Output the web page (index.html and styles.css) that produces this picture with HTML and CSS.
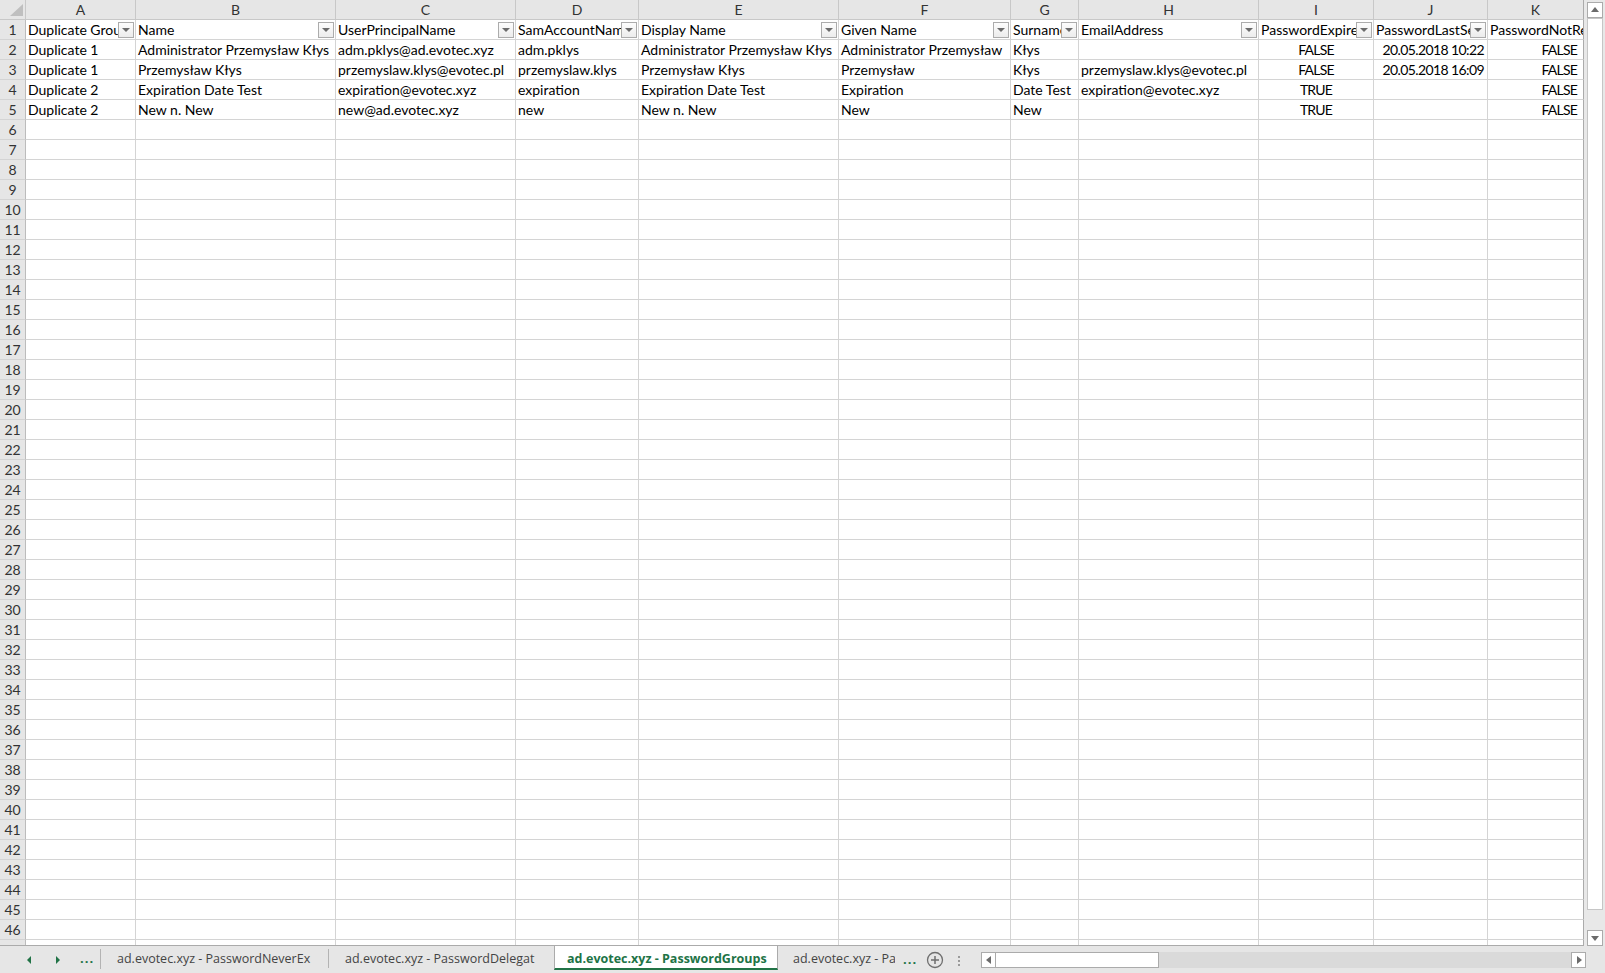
FILE: index.html
```html
<!DOCTYPE html>
<html lang="en">
<head>
    <meta charset="UTF-8">
    <meta name="viewport" content="width=device-width, initial-scale=1.0">
    <title>ad.evotec.xyz - PasswordGroups</title>
    <link rel="stylesheet" href="styles.css">
</head>
<body>
    <div class="workbook">
        <div class="sheet">
            <div class="grid" id="grid">
                <div class="row head">
                    <div class="cell corner"></div>
                    <div class="cell">A</div>
                    <div class="cell">B</div>
                    <div class="cell">C</div>
                    <div class="cell">D</div>
                    <div class="cell">E</div>
                    <div class="cell">F</div>
                    <div class="cell">G</div>
                    <div class="cell">H</div>
                    <div class="cell">I</div>
                    <div class="cell">J</div>
                    <div class="cell">K</div>
                </div>
                <div class="row">
                    <div class="cell num">1</div>
                    <div class="cell">Duplicate Group<span class="filter"></span></div>
                    <div class="cell">Name<span class="filter"></span></div>
                    <div class="cell">UserPrincipalName<span class="filter"></span></div>
                    <div class="cell">SamAccountName<span class="filter"></span></div>
                    <div class="cell">Display Name<span class="filter"></span></div>
                    <div class="cell">Given Name<span class="filter"></span></div>
                    <div class="cell">Surname<span class="filter"></span></div>
                    <div class="cell">EmailAddress<span class="filter"></span></div>
                    <div class="cell">PasswordExpired<span class="filter"></span></div>
                    <div class="cell">PasswordLastSet<span class="filter"></span></div>
                    <div class="cell">PasswordNotRequired</div>
                </div>
                <div class="row">
                    <div class="cell num">2</div>
                    <div class="cell">Duplicate 1</div>
                    <div class="cell">Administrator Przemysław Kłys</div>
                    <div class="cell">adm.pklys@ad.evotec.xyz</div>
                    <div class="cell">adm.pklys</div>
                    <div class="cell">Administrator Przemysław Kłys</div>
                    <div class="cell">Administrator Przemysław</div>
                    <div class="cell">Kłys</div>
                    <div class="cell"></div>
                    <div class="cell bool">FALSE</div>
                    <div class="cell date">20.05.2018 10:22</div>
                    <div class="cell bool last">FALSE</div>
                </div>
                <div class="row">
                    <div class="cell num">3</div>
                    <div class="cell">Duplicate 1</div>
                    <div class="cell">Przemysław Kłys</div>
                    <div class="cell">przemyslaw.klys@evotec.pl</div>
                    <div class="cell">przemyslaw.klys</div>
                    <div class="cell">Przemysław Kłys</div>
                    <div class="cell">Przemysław</div>
                    <div class="cell">Kłys</div>
                    <div class="cell">przemyslaw.klys@evotec.pl</div>
                    <div class="cell bool">FALSE</div>
                    <div class="cell date">20.05.2018 16:09</div>
                    <div class="cell bool last">FALSE</div>
                </div>
                <div class="row">
                    <div class="cell num">4</div>
                    <div class="cell">Duplicate 2</div>
                    <div class="cell">Expiration Date Test</div>
                    <div class="cell">expiration@evotec.xyz</div>
                    <div class="cell">expiration</div>
                    <div class="cell">Expiration Date Test</div>
                    <div class="cell">Expiration</div>
                    <div class="cell">Date Test</div>
                    <div class="cell">expiration@evotec.xyz</div>
                    <div class="cell bool">TRUE</div>
                    <div class="cell date"></div>
                    <div class="cell bool last">FALSE</div>
                </div>
                <div class="row">
                    <div class="cell num">5</div>
                    <div class="cell">Duplicate 2</div>
                    <div class="cell">New n. New</div>
                    <div class="cell">new@ad.evotec.xyz</div>
                    <div class="cell">new</div>
                    <div class="cell">New n. New</div>
                    <div class="cell">New</div>
                    <div class="cell">New</div>
                    <div class="cell"></div>
                    <div class="cell bool">TRUE</div>
                    <div class="cell date"></div>
                    <div class="cell bool last">FALSE</div>
                </div>
            </div>
            <div class="vscroll">
                <span class="sbtn up"></span>
                <span class="vthumb"></span>
                <span class="sbtn down"></span>
            </div>
        </div>

        <div class="tabbar">
            <div class="nav">
                <span class="arrow left"></span>
                <span class="arrow right"></span>
                <span class="more">...</span>
            </div>
            <div class="tab">ad.evotec.xyz - PasswordNeverEx</div>
            <div class="tab">ad.evotec.xyz - PasswordDelegat</div>
            <div class="tab active">ad.evotec.xyz - PasswordGroups</div>
            <div class="tab cut">ad.evotec.xyz - Pa</div>
            <span class="more">...</span>
            <span class="add">
                <svg width="18" height="18" viewBox="0 0 18 18">
                    <circle cx="9" cy="9" r="7.5" fill="none" stroke="#6f6f6f" stroke-width="1.3"/>
                    <path d="M9 5v8M5 9h8" stroke="#6f6f6f" stroke-width="1.5"/>
                </svg>
            </span>
            <span class="grip"></span>
            <div class="hscroll">
                <span class="sbtn left"></span>
                <span class="hthumb"></span>
                <span class="htrack"></span>
                <span class="sbtn right"></span>
            </div>
        </div>
    </div>

    <script>
        // fill the rest of the sheet with empty rows
        const grid = document.getElementById('grid');
        for (let r = 6; r <= 47; r++) {
            const row = document.createElement('div');
            row.className = 'row';
            let html = '<div class="cell num">' + r + '</div>';
            for (let c = 0; c < 11; c++) {
                html += '<div class="cell"></div>';
            }
            row.innerHTML = html;
            grid.appendChild(row);
        }
    </script>
</body>
</html>
```

FILE: styles.css
```css
html, body {
    margin: 0;
    padding: 0;
    height: 100%;
    overflow: hidden;
}
body {
    background-color: #e6e6e6;
    font-family: Lato, "Liberation Sans", sans-serif;
    color: #000;
}
.workbook {
    width: 1605px;
    height: 973px;
    display: flex;
    flex-direction: column;
}
.sheet {
    display: flex;
    height: 945px;
    border-bottom: 1px solid #ababab;
    background-color: #fff;
}
.grid {
    width: 1584px;
    height: 945px;
    overflow: hidden;
    flex: none;
}
.row {
    display: grid;
    grid-template-columns: 26px 110px 200px 180px 123px 200px 172px 68px 180px 115px 114px 96px;
    height: 20px;
}
.cell {
    position: relative;
    box-sizing: border-box;
    height: 20px;
    border-right: 1px solid #d4d4d4;
    border-bottom: 1px solid #d4d4d4;
    padding: 0 2px;
    font-size: 14px;
    line-height: 19px;
    white-space: nowrap;
    overflow: hidden;
}
.cell:last-child {
    border-right-color: #ababab;
}
.bool {
    text-align: center;
    letter-spacing: -0.8px;
}
.date {
    text-align: right;
    letter-spacing: -0.6px;
    padding-right: 3px;
}
.bool.last {
    text-align: right;
    padding-right: 6px;
}

/* column letters and row numbers */
.head .cell {
    background-color: #e6e6e6;
    color: #333;
    text-align: center;
    border-right-color: #c8c8c8;
    border-bottom-color: #c8c8c8;
}
.head .cell:last-child {
    border-right-color: #ababab;
}
.num {
    background-color: #e6e6e6;
    color: #333;
    text-align: center;
    padding: 0;
    border-right-color: #bcbcbc;
    border-bottom-color: #d4d4d4;
}
.corner::after {
    content: "";
    position: absolute;
    left: 10px;
    top: 4px;
    width: 13px;
    height: 12px;
    background-color: #bfbfbf;
    clip-path: polygon(100% 0, 100% 100%, 0 100%);
}

/* autofilter dropdown */
.filter {
    position: absolute;
    right: 1px;
    bottom: 1px;
    width: 16px;
    height: 16px;
    box-sizing: border-box;
    border: 1px solid #acacac;
    background: linear-gradient(#fdfdfd, #ececec);
}
.filter::after {
    content: "";
    position: absolute;
    left: 3px;
    top: 5px;
    border-left: 4px solid transparent;
    border-right: 4px solid transparent;
    border-top: 4px solid #6b6b6b;
}

/* scrollbars */
.vscroll {
    flex: none;
    width: 21px;
    height: 946px;
    background-color: #e8e8e8;
    position: relative;
}
.sbtn {
    position: absolute;
    width: 16px;
    height: 16px;
    box-sizing: border-box;
    border: 1px solid #ababab;
    background-color: #fff;
}
.sbtn::after {
    content: "";
    position: absolute;
    width: 0;
    height: 0;
}
.vscroll .up {
    left: 3px;
    top: 2px;
}
.vscroll .up::after {
    left: 3px;
    top: 4px;
    border-left: 4px solid transparent;
    border-right: 4px solid transparent;
    border-bottom: 5px solid #6b6b6b;
}
.vscroll .down {
    left: 3px;
    top: 930px;
}
.vscroll .down::after {
    left: 3px;
    top: 5px;
    border-left: 4px solid transparent;
    border-right: 4px solid transparent;
    border-top: 5px solid #6b6b6b;
}
.vthumb {
    position: absolute;
    left: 3px;
    top: 18px;
    width: 16px;
    height: 892px;
    box-sizing: border-box;
    border: 1px solid #c6c6c6;
    background-color: #fff;
}

/* sheet tabs */
.tabbar {
    height: 27px;
    display: flex;
    align-items: flex-start;
    font-family: "Open Sans", "Liberation Sans", sans-serif;
    font-size: 12.5px;
    color: #444;
    position: relative;
}
.nav {
    width: 100px;
    height: 20px;
    margin-top: 3px;
    border-right: 1px solid #b3b3b3;
    position: relative;
    flex: none;
}
.arrow {
    position: absolute;
    top: 7px;
    width: 0;
    height: 0;
    border-top: 4px solid transparent;
    border-bottom: 4px solid transparent;
}
.arrow.left {
    left: 27px;
    border-right: 4px solid #217346;
}
.arrow.right {
    left: 56px;
    border-left: 4px solid #217346;
}
.more {
    color: #217346;
    font-weight: bold;
    font-size: 13px;
    letter-spacing: 1px;
}
.nav .more {
    position: absolute;
    left: 80px;
    top: 0;
}
.tab {
    flex: none;
    box-sizing: border-box;
    height: 24px;
    line-height: 22px;
    padding-top: 2px;
    padding-left: 16px;
    white-space: nowrap;
    overflow: hidden;
    position: relative;
}
.tab:nth-child(2) {
    width: 228px;
}
.tab:nth-child(2)::after {
    content: "";
    position: absolute;
    right: 0;
    top: 3px;
    height: 19px;
    border-right: 1px solid #b3b3b3;
}
.tab:nth-child(3) {
    width: 225px;
}
.tab.active {
    width: 224px;
    padding-left: 12px;
    background-color: #fff;
    color: #217346;
    font-weight: bold;
    border-left: 1px solid #ababab;
    border-right: 1px solid #ababab;
    border-bottom: 2px solid #217346;
}
.tab.cut {
    width: 117px;
    padding-left: 15px;
}
.tabbar > .more {
    margin-top: 4px;
    margin-left: 8px;
    flex: none;
}
.add {
    margin-left: 9px;
    margin-top: 5px;
    height: 18px;
    flex: none;
}
.grip {
    margin-left: 14px;
    margin-top: 9px;
    width: 2px;
    height: 11px;
    flex: none;
    background: radial-gradient(circle, #9a9a9a 45%, transparent 55%) 0 0 / 2px 4px repeat-y;
}
.hscroll {
    position: absolute;
    left: 981px;
    top: 6px;
    width: 606px;
    height: 16px;
}
.hscroll .left {
    left: 0;
    top: 0;
    width: 15px;
}
.hscroll .left::after {
    left: 4px;
    top: 3px;
    border-top: 4px solid transparent;
    border-bottom: 4px solid transparent;
    border-right: 5px solid #6b6b6b;
}
.hthumb {
    position: absolute;
    left: 14px;
    top: 0;
    width: 164px;
    height: 16px;
    box-sizing: border-box;
    border: 1px solid #ababab;
    background-color: #fff;
}
.htrack {
    position: absolute;
    left: 178px;
    top: 0;
    width: 412px;
    height: 16px;
    background-color: #dadada;
}
.hscroll .right {
    left: 590px;
    top: 0;
    width: 15px;
}
.hscroll .right::after {
    left: 5px;
    top: 3px;
    border-top: 4px solid transparent;
    border-bottom: 4px solid transparent;
    border-left: 5px solid #6b6b6b;
}
```
